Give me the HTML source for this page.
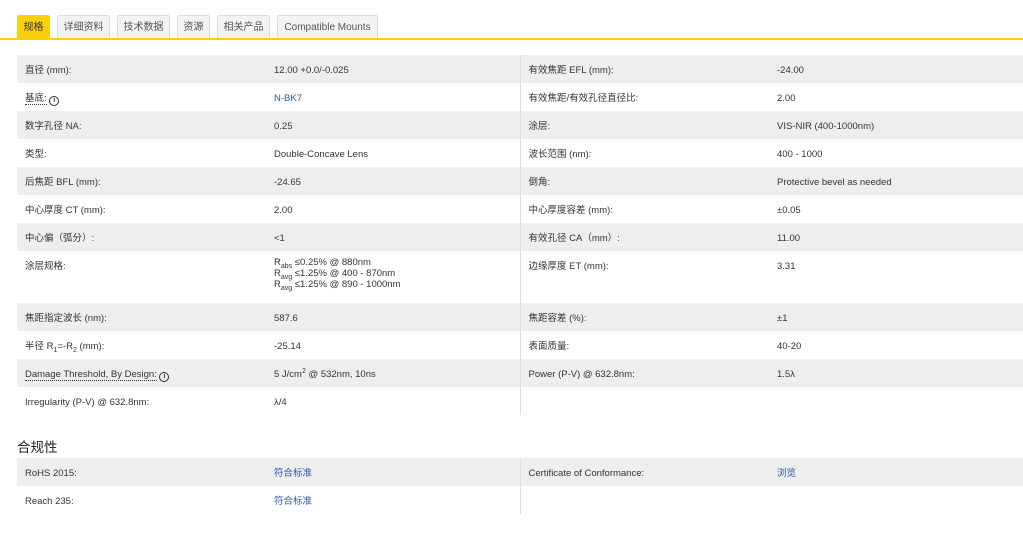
<!DOCTYPE html>
<html><head><meta charset="utf-8"><style>
*{margin:0;padding:0;box-sizing:border-box}
body{width:1023px;height:534px;background:#fff;font-family:"Liberation Sans","Noto Sans CJK SC",sans-serif;font-size:9.5px;color:#333;position:relative;overflow:hidden}
.tabs{position:absolute;top:15px;left:17px;height:23px}
.tab{position:absolute;top:0;height:23px;border:1px solid #ddd;border-bottom:none;background:#f3f3f3;color:#555;font-size:10px;line-height:23px;text-align:center;border-radius:2px 2px 0 0}
.tab.on{background:#f9d10b;border-color:#f9d10b;color:#333}
.line{position:absolute;top:38px;left:0;width:1023px;height:2px;background:#f9d10b}
table{position:absolute;left:17px;width:1006px;border-collapse:collapse}
td{vertical-align:top;padding:0 0 0 8px;line-height:13px;padding-top:9px;height:28px}
tr.g td{background:#eeeeee}
td.c3{border-left:1px solid #ddd}
a{color:#2a5aa8;text-decoration:none}
.u{border-bottom:1px dotted #333}
.i{display:inline-block;width:10px;height:10px;border:1.5px solid #333;border-radius:50%;font-size:7px;line-height:7px;text-align:center;font-weight:bold;vertical-align:-1px}
sub,sup{font-size:7px;line-height:0}
h3{position:absolute;left:17px;top:436px;font-size:13.5px;font-weight:normal;color:#222}
</style></head><body>
<div class="tabs">
<div class="tab on" style="left:0;width:33px">规格</div>
<div class="tab" style="left:40px;width:53px">详细资料</div>
<div class="tab" style="left:100px;width:53px">技术数据</div>
<div class="tab" style="left:160px;width:33px">资源</div>
<div class="tab" style="left:200px;width:53px">相关产品</div>
<div class="tab" style="left:260px;width:101px">Compatible Mounts</div>
</div>
<div class="line"></div>
<table style="top:55px">
<colgroup><col style="width:249px"><col style="width:254px"><col style="width:249px"><col></colgroup>
<tr class="g"><td>直径 (mm):</td><td>12.00 +0.0/-0.025</td><td class="c3">有效焦距 EFL (mm):</td><td>-24.00</td></tr>
<tr><td><span class="u">基底:</span> <span class="i">i</span></td><td><a>N-BK7</a></td><td class="c3">有效焦距/有效孔径直径比:</td><td>2.00</td></tr>
<tr class="g"><td>数字孔径 NA:</td><td>0.25</td><td class="c3">涂层:</td><td>VIS-NIR (400-1000nm)</td></tr>
<tr><td>类型:</td><td>Double-Concave Lens</td><td class="c3">波长范围 (nm):</td><td>400 - 1000</td></tr>
<tr class="g"><td>后焦距 BFL (mm):</td><td>-24.65</td><td class="c3">倒角:</td><td>Protective bevel as needed</td></tr>
<tr><td>中心厚度 CT (mm):</td><td>2.00</td><td class="c3">中心厚度容差 (mm):</td><td>±0.05</td></tr>
<tr class="g"><td>中心偏（弧分）:</td><td>&lt;1</td><td class="c3">有效孔径 CA（mm）:</td><td>11.00</td></tr>
<tr><td style="height:52px">涂层规格:</td><td style="line-height:11px;padding-top:6px">R<sub>abs</sub> ≤0.25% @ 880nm<br>R<sub>avg</sub> ≤1.25% @ 400 - 870nm<br>R<sub>avg</sub> ≤1.25% @ 890 - 1000nm</td><td class="c3">边缘厚度 ET (mm):</td><td>3.31</td></tr>
<tr class="g"><td>焦距指定波长 (nm):</td><td>587.6</td><td class="c3">焦距容差 (%):</td><td>±1</td></tr>
<tr><td>半径 R<sub>1</sub>=-R<sub>2</sub> (mm):</td><td>-25.14</td><td class="c3">表面质量:</td><td>40-20</td></tr>
<tr class="g"><td><span class="u">Damage Threshold, By Design:</span> <span class="i">i</span></td><td>5 J/cm<sup>2</sup> @ 532nm, 10ns</td><td class="c3">Power (P-V) @ 632.8nm:</td><td>1.5λ</td></tr>
<tr><td>Irregularity (P-V) @ 632.8nm:</td><td>λ/4</td><td class="c3"></td><td></td></tr>
</table>
<h3>合规性</h3>
<table style="top:458px">
<colgroup><col style="width:249px"><col style="width:254px"><col style="width:249px"><col></colgroup>
<tr class="g"><td>RoHS 2015:</td><td><a>符合标准</a></td><td class="c3">Certificate of Conformance:</td><td><a>浏览</a></td></tr>
<tr><td>Reach 235:</td><td><a>符合标准</a></td><td class="c3"></td><td></td></tr>
</table>
</body></html>
